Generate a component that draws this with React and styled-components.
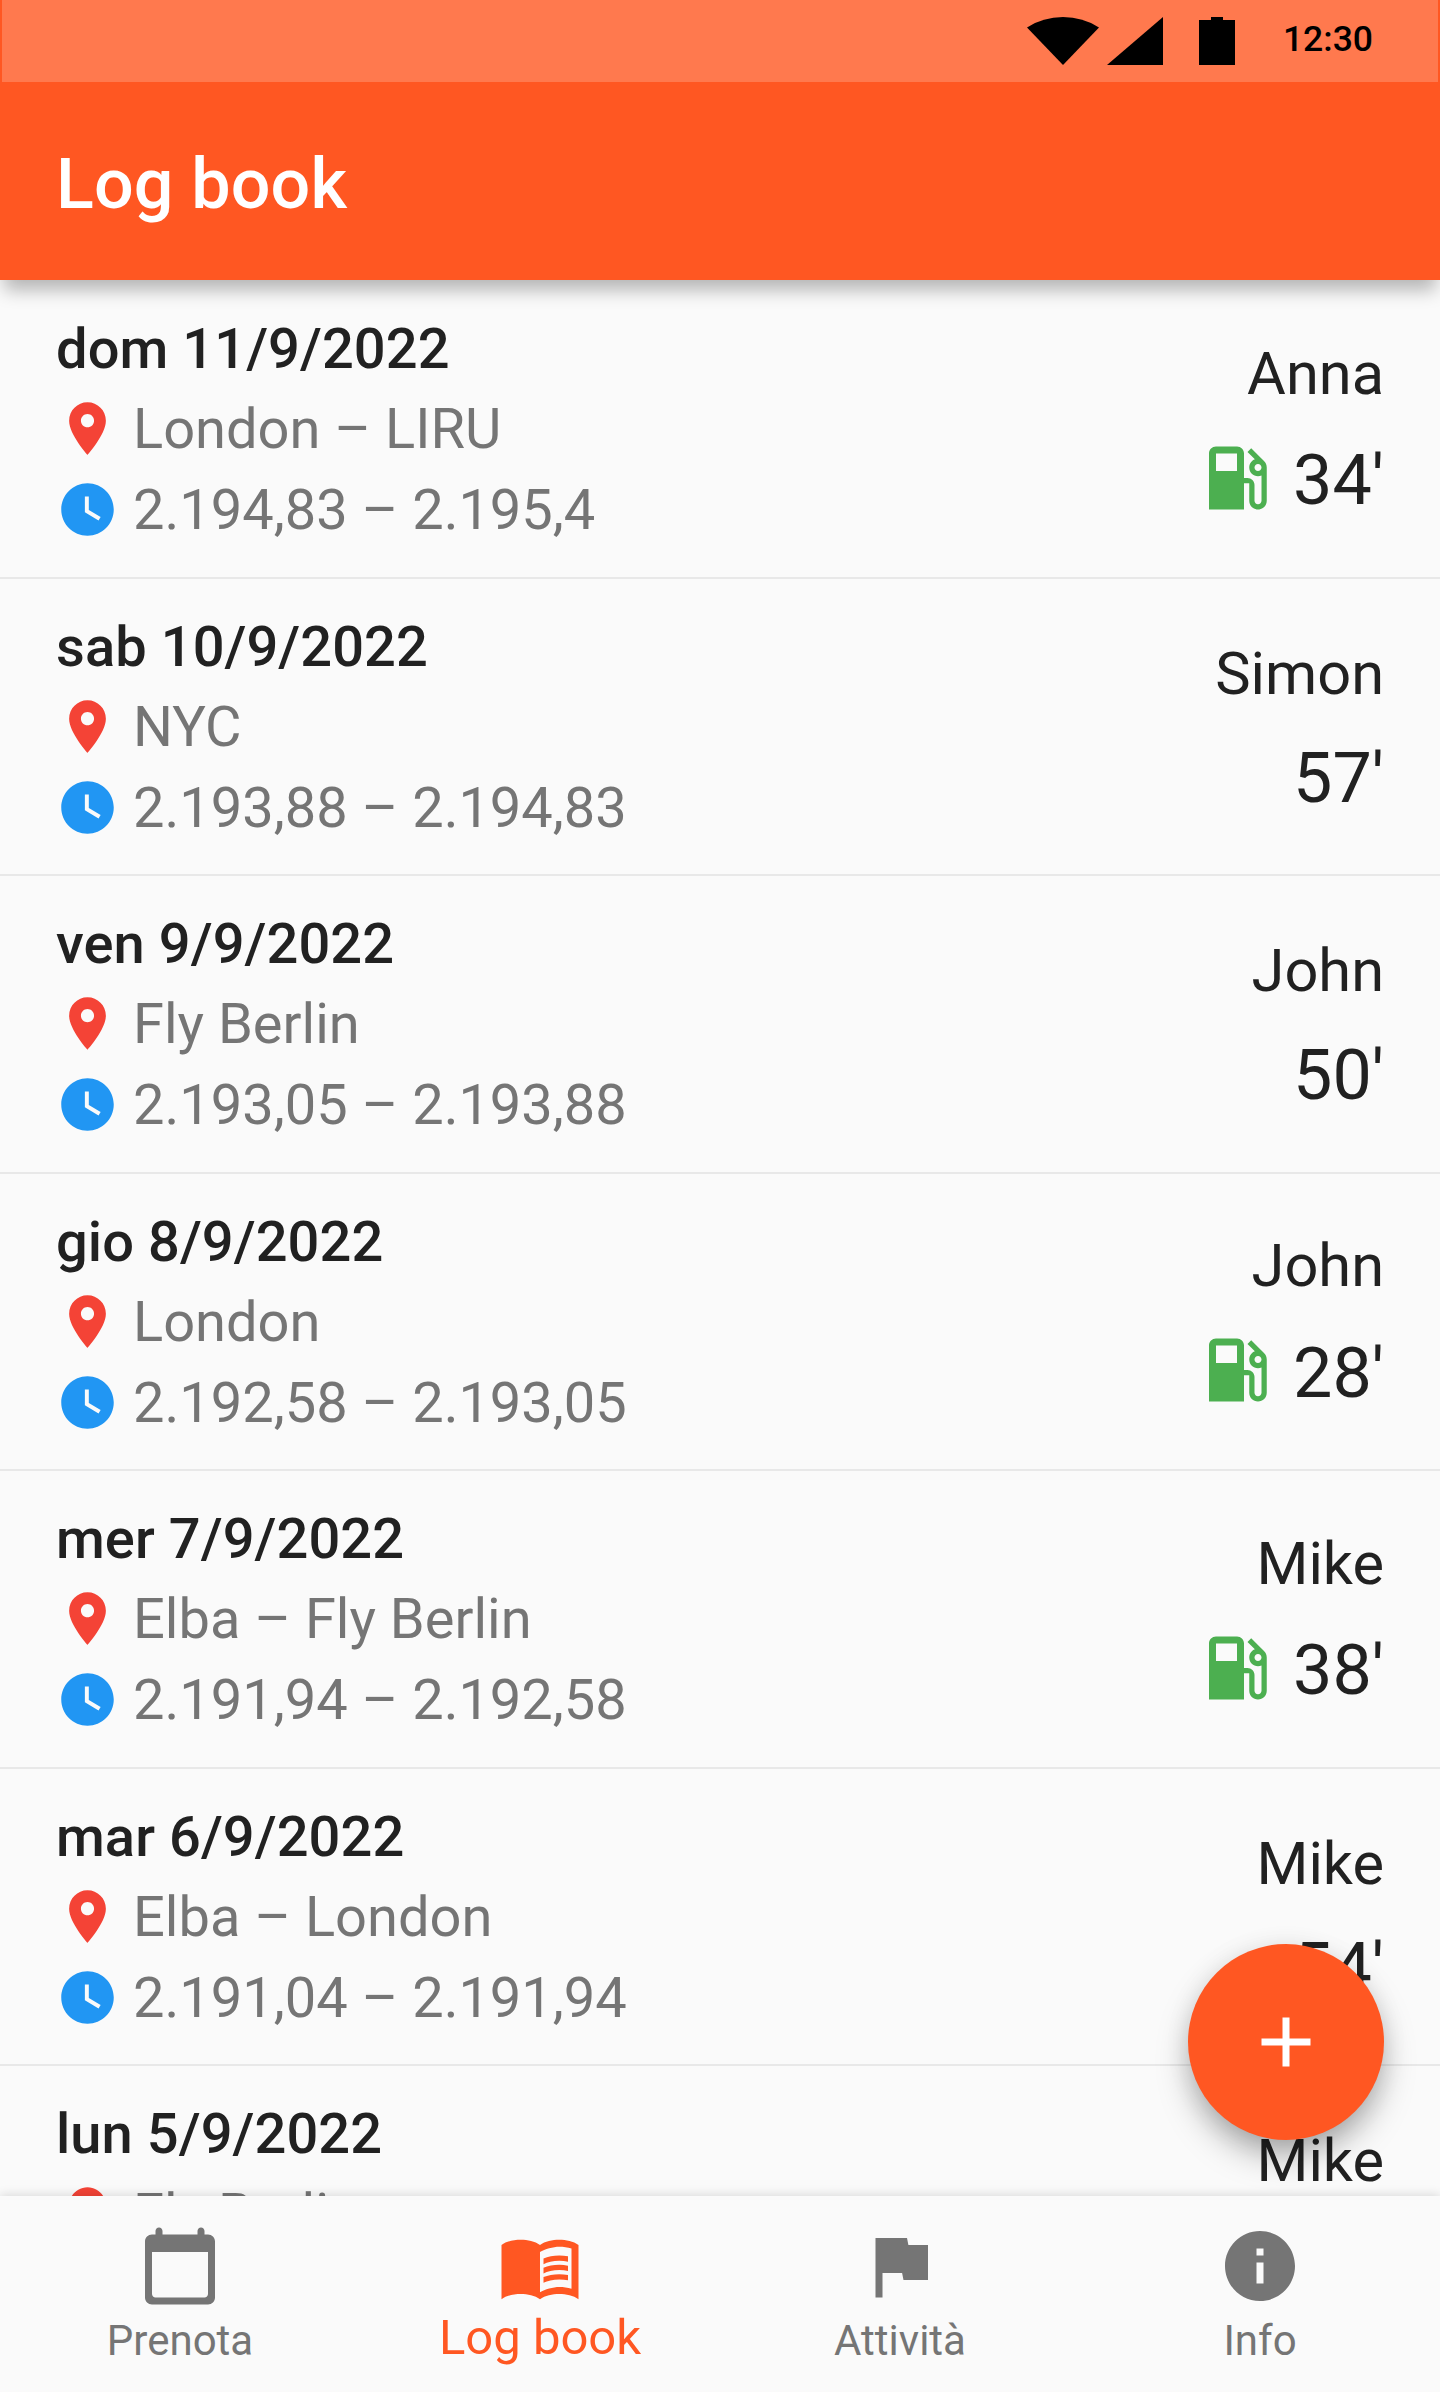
import React from 'react';
import styled, { createGlobalStyle } from 'styled-components';

const GlobalStyle = createGlobalStyle`
  *, *::before, *::after { box-sizing: border-box; }
  body { margin: 0; background: #fafafa; font-family: Roboto, "Noto Sans", sans-serif; }
`;

const Screen = styled.div`
  position: relative;
  display: flex;
  flex-direction: column;
  width: 1440px;
  height: 2392px;
  overflow: hidden;
  background: #fafafa;
  color: #212121;
`;

const Header = styled.header`
  z-index: 1;
  flex: none;
  display: flex;
  flex-direction: column;
  height: 280px;
  background: #ff5722;
  box-shadow: 0 14px 17px -4px rgba(0, 0, 0, 0.28);
`;

const StatusBar = styled.div`
  display: flex;
  align-items: flex-start;
  justify-content: flex-end;
  height: 82px;
  margin: 0 2px;
  padding-right: 65px;
  background: #ff794e;
  color: #000;
`;

const StatusGlyphs = styled.svg`
  display: block;
  width: 212px;
  height: 48px;
  margin: 17px 41px 0 0;
`;

const Time = styled.span`
  width: 93px;
  font-size: 35.5px;
  font-weight: 500;
  line-height: 42px;
  margin-top: 18px;
  text-align: right;
`;

const Title = styled.h1`
  display: flex;
  align-items: center;
  flex: 1;
  margin: 0;
  padding: 6px 56px 0;
  color: #fff;
  font-size: 70px;
  font-weight: 500;
  letter-spacing: 0.15px;
  line-height: 82px;
`;

const List = styled.main`
  flex: 1;
  min-height: 0;
  overflow: hidden;
  padding-top: 1px;
`;

const Entry = styled.article`
  display: flex;
  justify-content: space-between;
  height: 297.5px;
  padding: 0 56px;
  border-bottom: 2px solid #e8e8e8;
`;

const Flight = styled.div`
  padding-top: 28px;
`;

const FlightDate = styled.h2`
  margin: 0 0 -1px;
  font-size: 56px;
  font-weight: 500;
  letter-spacing: 0.08px;
  line-height: 80px;
`;

const Detail = styled.div`
  display: flex;
  align-items: center;
  gap: 14px;
  height: 81px;
  color: #757575;
  font-size: 56px;
  line-height: 79px;
`;

const DetailText = styled.span`
  padding-top: 2px;
`;

const Pilot = styled.div`
  display: flex;
  flex-direction: column;
  align-items: flex-end;
  justify-content: center;
  gap: 27px;
  padding-top: 1px;
`;

const PilotName = styled.div`
  font-size: 59.5px;
  line-height: 70px;
`;

const Duration = styled.div`
  display: flex;
  align-items: center;
  gap: 14px;
  min-height: 79px;
`;

const Minutes = styled.span`
  padding-top: 5px;
  font-size: 70px;
  line-height: 74px;
`;

const Glyph = styled.svg`
  display: block;
  flex: none;
  width: ${(p) => p.$size}px;
  height: ${(p) => p.$size}px;
  fill: ${(p) => p.$color};
`;

const AddButton = styled.button`
  position: absolute;
  z-index: 1;
  right: 56px;
  bottom: 252px;
  display: grid;
  place-items: center;
  width: 196px;
  height: 196px;
  padding: 0;
  border: 0;
  border-radius: 50%;
  background: #ff5722;
  box-shadow: 0 18px 34px -4px rgba(0, 0, 0, 0.34), 0 2px 26px 0 rgba(0, 0, 0, 0.08);
`;

const BottomNav = styled.nav`
  z-index: 2;
  flex: none;
  display: grid;
  grid-template-columns: repeat(4, 1fr);
  height: 196px;
  background: #fafafa;
  box-shadow: 0 -1px 10px rgba(0, 0, 0, 0.14);
`;

const Tab = styled.a`
  display: flex;
  flex-direction: column;
  align-items: center;
  padding-top: 28px;
  color: ${(p) => (p.$active ? '#ff5722' : '#757575')};
  font-size: ${(p) => (p.$active ? 49 : 42)}px;
  line-height: 60px;
`;

const TabLabel = styled.span`
  margin-top: ${(p) => (p.$active ? 0 : 3)}px;
`;

const PATHS = {
  place:
    'M12 2C8.13 2 5 5.13 5 9c0 5.25 7 13 7 13s7-7.75 7-13c0-3.87-3.13-7-7-7zm0 9.5c-1.38 0-2.5-1.12-2.5-2.5s1.12-2.5 2.5-2.5 2.5 1.12 2.5 2.5-1.12 2.5-2.5 2.5z',
  clock:
    'M12 2C6.5 2 2 6.5 2 12s4.5 10 10 10 10-4.5 10-10S17.5 2 12 2zm4.2 14.2L11 13V7h1.5v5.2l4.5 2.7-.8 1.3z',
  fuel:
    'M19.77 7.23l.01-.01-3.72-3.72L15 4.56l2.11 2.11c-.94.36-1.61 1.26-1.61 2.33 0 1.38 1.12 2.5 2.5 2.5.36 0 .69-.08 1-.21v7.21c0 .55-.45 1-1 1s-1-.45-1-1V14c0-1.1-.9-2-2-2h-1V5c0-1.1-.9-2-2-2H6c-1.1 0-2 .9-2 2v16h10v-7.5h1.5v5c0 1.38 1.12 2.5 2.5 2.5s2.5-1.12 2.5-2.5V9c0-.69-.28-1.32-.73-1.77zM12 10H6V5h6v5zm6 0c-.55 0-1-.45-1-1s.45-1 1-1 1 .45 1 1-.45 1-1 1z',
  add: 'M19 13h-6v6h-2v-6H5v-2h6V5h2v6h6v2z',
  calendar:
    'M20 3h-1V2c0-.55-.45-1-1-1s-1 .45-1 1v1H7V2c0-.55-.45-1-1-1s-1 .45-1 1v1H4c-1.1 0-2 .9-2 2v16c0 1.1.9 2 2 2h16c1.1 0 2-.9 2-2V5c0-1.1-.9-2-2-2zm-1 18H5c-.55 0-1-.45-1-1V8h16v12c0 .55-.45 1-1 1z',
  book:
    'M17.5 4.5c-1.95 0-4.05.4-5.5 1.5-1.45-1.1-3.55-1.5-5.5-1.5S2.45 4.9 1 6v15.5C2.45 20.4 4.55 20 6.5 20s4.05.4 5.5 1.5c1.45-1.1 3.55-1.5 5.5-1.5s4.05.4 5.5 1.5V6c-1.45-1.1-3.55-1.5-5.5-1.5zM21 18.5c-1.1-.35-2.3-.5-3.5-.5-1.7 0-4.15.65-5.5 1.5V8c1.35-.85 3.8-1.5 5.5-1.5 1.2 0 2.4.15 3.5.5v11.5zM17.5 10.5c.88 0 1.73.09 2.5.26V9.24c-.79-.15-1.64-.24-2.5-.24-1.7 0-3.24.29-4.5.83v1.66c1.13-.64 2.7-.99 4.5-.99zM13 12.49v1.66c1.13-.64 2.7-.99 4.5-.99.88 0 1.73.09 2.5.26V11.9c-.79-.15-1.64-.24-2.5-.24-1.7 0-3.24.3-4.5.83zM17.5 14.33c-1.7 0-3.24.29-4.5.83v1.66c1.13-.64 2.7-.99 4.5-.99.88 0 1.73.09 2.5.26v-1.52c-.79-.16-1.64-.24-2.5-.24z',
  flag: 'M14.4 6L14 4H5v17h2v-7h5.6l.4 2h7V6z',
  info:
    'M12 2C6.48 2 2 6.48 2 12s4.48 10 10 10 10-4.48 10-10S17.52 2 12 2zm1 15h-2v-6h2v6zm0-8h-2V7h2v2z',
};

const Icon = ({ name, size = 84, color = 'currentColor' }) => (
  <Glyph viewBox="0 0 24 24" $size={size} $color={color} aria-hidden="true">
    <path d={PATHS[name]} />
  </Glyph>
);

const ENTRIES = [
  { date: 'dom 11/9/2022', place: 'London – LIRU', hours: '2.194,83 – 2.195,4', pilot: 'Anna', time: "34'", fuel: true },
  { date: 'sab 10/9/2022', place: 'NYC', hours: '2.193,88 – 2.194,83', pilot: 'Simon', time: "57'" },
  { date: 'ven 9/9/2022', place: 'Fly Berlin', hours: '2.193,05 – 2.193,88', pilot: 'John', time: "50'" },
  { date: 'gio 8/9/2022', place: 'London', hours: '2.192,58 – 2.193,05', pilot: 'John', time: "28'", fuel: true },
  { date: 'mer 7/9/2022', place: 'Elba – Fly Berlin', hours: '2.191,94 – 2.192,58', pilot: 'Mike', time: "38'", fuel: true },
  { date: 'mar 6/9/2022', place: 'Elba – London', hours: '2.191,04 – 2.191,94', pilot: 'Mike', time: "54'" },
  { date: 'lun 5/9/2022', place: 'Fly Berlin', pilot: 'Mike' },
];

const TABS = [
  { icon: 'calendar', label: 'Prenota' },
  { icon: 'book', label: 'Log book', active: true },
  { icon: 'flag', label: 'Attività' },
  { icon: 'info', label: 'Info' },
];

export default function App() {
  return (
    <Screen>
      <GlobalStyle />
      <Header>
        <StatusBar>
          <StatusGlyphs viewBox="0 0 212 48" aria-hidden="true">
            <path d="M0 10.5Q16 0 36 0T72 10.5L36 48Z" />
            <path d="M80 48H136V0Z" />
            <path d="M172 3H184V0H196V3H208V48H172Z" />
          </StatusGlyphs>
          <Time>12:30</Time>
        </StatusBar>
        <Title>Log book</Title>
      </Header>
      <List>
        {ENTRIES.map((e) => (
          <Entry key={e.date}>
            <Flight>
              <FlightDate>{e.date}</FlightDate>
              <Detail>
                <Icon name="place" size={63} color="#f44336" />
                <DetailText>{e.place}</DetailText>
              </Detail>
              {e.hours && (
                <Detail>
                  <Icon name="clock" size={63} color="#2196f3" />
                  <DetailText>{e.hours}</DetailText>
                </Detail>
              )}
            </Flight>
            <Pilot>
              <PilotName>{e.pilot}</PilotName>
              <Duration>
                {e.fuel && <Icon name="fuel" color="#4caf50" />}
                {e.time && <Minutes>{e.time}</Minutes>}
              </Duration>
            </Pilot>
          </Entry>
        ))}
      </List>
      <AddButton aria-label="+">
        <Icon name="add" color="#fff" />
      </AddButton>
      <BottomNav>
        {TABS.map((t) => (
          <Tab key={t.label} $active={t.active}>
            <Icon name={t.icon} />
            <TabLabel $active={t.active}>{t.label}</TabLabel>
          </Tab>
        ))}
      </BottomNav>
    </Screen>
  );
}
